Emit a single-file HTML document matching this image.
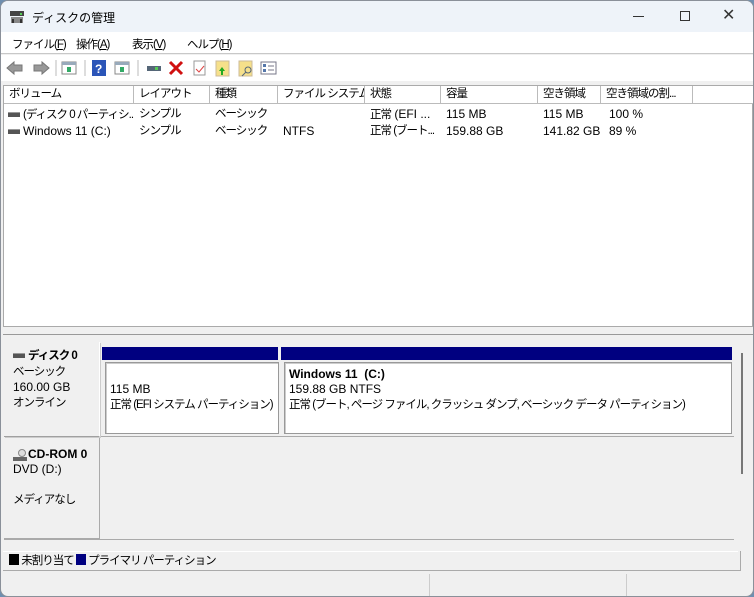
<!DOCTYPE html>
<html><head><meta charset="utf-8"><style>
*{box-sizing:border-box;margin:0;padding:0}
body{width:754px;height:597px;overflow:hidden;background:#6f8fb0;font-family:"Liberation Sans","Noto Sans CJK JP",sans-serif;font-size:12px;color:#000;position:relative;white-space:nowrap}
.j{letter-spacing:-1px;font-size:11.5px}
.win{position:absolute;left:0;top:0;width:754px;height:597px;background:#f0f0f0;border:1px solid #8a9099;border-radius:8px;overflow:hidden}
.abs{position:absolute;white-space:nowrap}
.title{position:absolute;left:0;top:0;width:754px;height:31px;background:#eef3f9}
.menu{position:absolute;left:0;top:31px;width:754px;height:22px;background:#fff;border-bottom:1px solid #c8c8c8}
.tb{position:absolute;left:0;top:54px;width:754px;height:26px;background:#fff}
.list{position:absolute;left:2px;top:84px;width:750px;height:242px;background:#fff;border:1px solid #aaa}
.hd{position:absolute;top:0;height:18px;border-right:1px solid #bbb;border-bottom:1px solid #bbb;padding-left:5px;line-height:17px;background:#fff;overflow:hidden;letter-spacing:-1px;font-size:11.5px}
.row{position:absolute;left:0;height:16px;line-height:16px;overflow:hidden}
.bar{position:absolute;background:#000080;height:13px;top:346px}
.pbox{position:absolute;top:361px;height:72px;background:#fff;border:1px solid #999;box-shadow:inset 1px 1px 0 #ccc;padding:4px 4px;line-height:15px;overflow:hidden}
.drv{display:inline-block;width:12px;height:5px;background:#555;border-top:1px solid #999;vertical-align:middle;margin-right:3px}
</style></head><body><div class="win">
<div class="title">
<svg class="abs" style="left:8px;top:9px" width="16" height="14"><rect x="1" y="1" width="14" height="5" fill="#444"/><rect x="11" y="3" width="2" height="2" fill="#5c5"/><rect x="2" y="7" width="12" height="6" fill="#888"/><rect x="3" y="9" width="2" height="4" fill="#333"/><rect x="11" y="9" width="2" height="4" fill="#333"/></svg>
<div class="abs" style="left:31px;top:8px;font-size:12px">ディスクの管理</div>
<div class="abs" style="left:632px;top:15px;width:11px;height:1px;background:#333"></div>
<div class="abs" style="left:679px;top:10px;width:10px;height:10px;border:1px solid #333"></div>
<div class="abs" style="left:721px;top:4px;font-size:16px;color:#333">✕</div>
</div>
<div class="menu">
<div class="abs j" style="left:11px;top:4px">ファイル(<u>F</u>)</div>
<div class="abs j" style="left:75px;top:4px">操作(<u>A</u>)</div>
<div class="abs j" style="left:131px;top:4px">表示(<u>V</u>)</div>
<div class="abs j" style="left:186px;top:4px">ヘルプ(<u>H</u>)</div>
</div>
<div class="tb">
<svg class="abs" style="left:4px;top:4px" width="280" height="18">
<path d="M2 9 L9 3 V6 H17 V12 H9 V15 Z" fill="#999" stroke="#777"/>
<path d="M44 9 L37 3 V6 H29 V12 H37 V15 Z" fill="#999" stroke="#777"/>
<line x1="51" y1="1" x2="51" y2="17" stroke="#bbb"/>
<rect x="57" y="3" width="14" height="12" fill="#fff" stroke="#888"/><rect x="57" y="3" width="14" height="3" fill="#9ab"/><rect x="62" y="8" width="4" height="5" fill="#3a6"/>
<line x1="80" y1="1" x2="80" y2="17" stroke="#bbb"/>
<rect x="87" y="1" width="14" height="16" fill="#2b55b8"/><text x="90" y="14" fill="#fff" font-size="12" font-family="Liberation Sans" font-weight="bold">?</text>
<rect x="110" y="3" width="14" height="12" fill="#fff" stroke="#888"/><rect x="110" y="3" width="14" height="3" fill="#9ab"/><rect x="115" y="8" width="4" height="5" fill="#3a6"/>
<line x1="133" y1="1" x2="133" y2="17" stroke="#bbb"/>
<rect x="142" y="7" width="14" height="5" fill="#567"/><rect x="150" y="8" width="3" height="3" fill="#5c5"/>
<path d="M165 3 L177 15 M177 3 L165 15" stroke="#d01010" stroke-width="3"/>
<rect x="189" y="2" width="11" height="14" fill="#fff" stroke="#999"/><path d="M191 10 l3 3 l5 -6" stroke="#d44" fill="none"/>
<rect x="211" y="2" width="13" height="15" fill="#f6e08a" stroke="#cb9"/><path d="M217 8 l3 4 h-2 v4 h-2 v-4 h-2z" fill="#2a2"/>
<rect x="234" y="2" width="13" height="15" fill="#f6e08a" stroke="#cb9"/><circle cx="243" cy="11" r="3" fill="none" stroke="#567"/><line x1="241" y1="13" x2="237" y2="17" stroke="#567"/>
<rect x="256" y="3" width="15" height="12" fill="#fff" stroke="#778"/><line x1="263" y1="7" x2="269" y2="7" stroke="#778"/><line x1="263" y1="11" x2="269" y2="11" stroke="#778"/><rect x="258" y="5" width="3" height="3" fill="#57a"/><rect x="258" y="10" width="3" height="3" fill="#57a"/>
</svg>
</div>
<div class="list">
<div class="hd" style="left:0;width:130px">ボリューム</div>
<div class="hd" style="left:130px;width:76px">レイアウト</div>
<div class="hd" style="left:206px;width:68px">種類</div>
<div class="hd" style="left:274px;width:87px">ファイル システム</div>
<div class="hd" style="left:361px;width:76px">状態</div>
<div class="hd" style="left:437px;width:97px">容量</div>
<div class="hd" style="left:534px;width:63px">空き領域</div>
<div class="hd" style="left:597px;width:92px">空き領域の割...</div>
<div class="hd" style="left:689px;width:61px;border-right:none"></div>
<div class="row" style="top:20px;left:4px;width:126px"><span class="drv"></span><span class="j">(ディスク 0 パーティシ...</span></div>
<div class="row j" style="top:20px;left:135px">シンプル</div>
<div class="row j" style="top:20px;left:211px">ベーシック</div>
<div class="row" style="top:20px;left:366px"><span class="j">正常</span> (EFI ...</div>
<div class="row" style="top:20px;left:442px">115 MB</div>
<div class="row" style="top:20px;left:539px">115 MB</div>
<div class="row" style="top:20px;left:605px">100 %</div>
<div class="row" style="top:37px;left:4px"><span class="drv"></span>Windows 11 (C:)</div>
<div class="row j" style="top:37px;left:135px">シンプル</div>
<div class="row j" style="top:37px;left:211px">ベーシック</div>
<div class="row" style="top:37px;left:279px">NTFS</div>
<div class="row j" style="top:37px;left:366px;width:70px">正常 (ブート...</div>
<div class="row" style="top:37px;left:442px">159.88 GB</div>
<div class="row" style="top:37px;left:539px">141.82 GB</div>
<div class="row" style="top:37px;left:605px">89 %</div>
</div>
<div class="abs" style="left:2px;top:333px;width:750px;height:1px;background:#999"></div>
<div class="abs" style="left:3px;top:341px;width:96px;height:95px;border-right:1px solid #fff;border-bottom:1px solid #a0a0a0;box-shadow:1px 1px 0 #ccc"></div>
<div class="abs" style="left:12px;top:347px;line-height:15px"><span class="drv"></span><b class="j">ディスク 0</b><br><span class="j">ベーシック</span><br>160.00 GB<br><span class="j">オンライン</span></div>
<div class="bar" style="left:101px;width:176px"></div>
<div class="bar" style="left:280px;width:451px"></div>
<div class="pbox" style="left:104px;width:174px"><br>115 MB<br><span class="j">正常 (EFI システム パーティション)</span></div>
<div class="pbox" style="left:283px;width:448px"><b>Windows 11&nbsp; (C:)</b><br>159.88 GB NTFS<br><span class="j">正常 (ブート, ページ ファイル, クラッシュ ダンプ, ベーシック データ パーティション)</span></div>
<div class="abs" style="left:100px;top:435px;width:633px;height:1px;background:#aaa"></div>
<div class="abs" style="left:3px;top:437px;width:96px;height:101px;border-right:1px solid #aaa;border-bottom:1px solid #aaa"></div>
<div class="abs" style="left:3px;top:538px;width:730px;height:1px;background:#aaa"></div>
<div class="abs" style="left:12px;top:446px;line-height:15px"><span style="display:inline-block;width:15px;height:12px;position:relative;vertical-align:middle"><span style="position:absolute;left:5px;top:0;width:8px;height:8px;border-radius:50%;border:1px solid #888;background:#ddd"></span><span style="position:absolute;left:0;top:8px;width:14px;height:4px;background:#666"></span></span><b>CD-ROM 0</b><br>DVD (D:)<br><br><span class="j">メディアなし</span></div>
<div class="abs" style="left:740px;top:352px;width:2px;height:121px;background:#777"></div>
<div class="abs" style="left:2px;top:550px;width:735px;height:1px;background:#fff"></div>
<div class="abs j" style="left:8px;top:553px;line-height:14px"><span style="display:inline-block;width:10px;height:11px;background:#000;vertical-align:-1px"></span> 未割り当て <span style="display:inline-block;width:10px;height:11px;background:#000080;vertical-align:-1px"></span> プライマリ パーティション</div>
<div class="abs" style="left:2px;top:569px;width:738px;height:1px;background:#aaa"></div>
<div class="abs" style="left:739px;top:550px;width:1px;height:20px;background:#aaa"></div>
<div class="abs" style="left:428px;top:573px;width:1px;height:22px;background:#ccc"></div>
<div class="abs" style="left:625px;top:573px;width:1px;height:22px;background:#ccc"></div>
</div></body></html>
